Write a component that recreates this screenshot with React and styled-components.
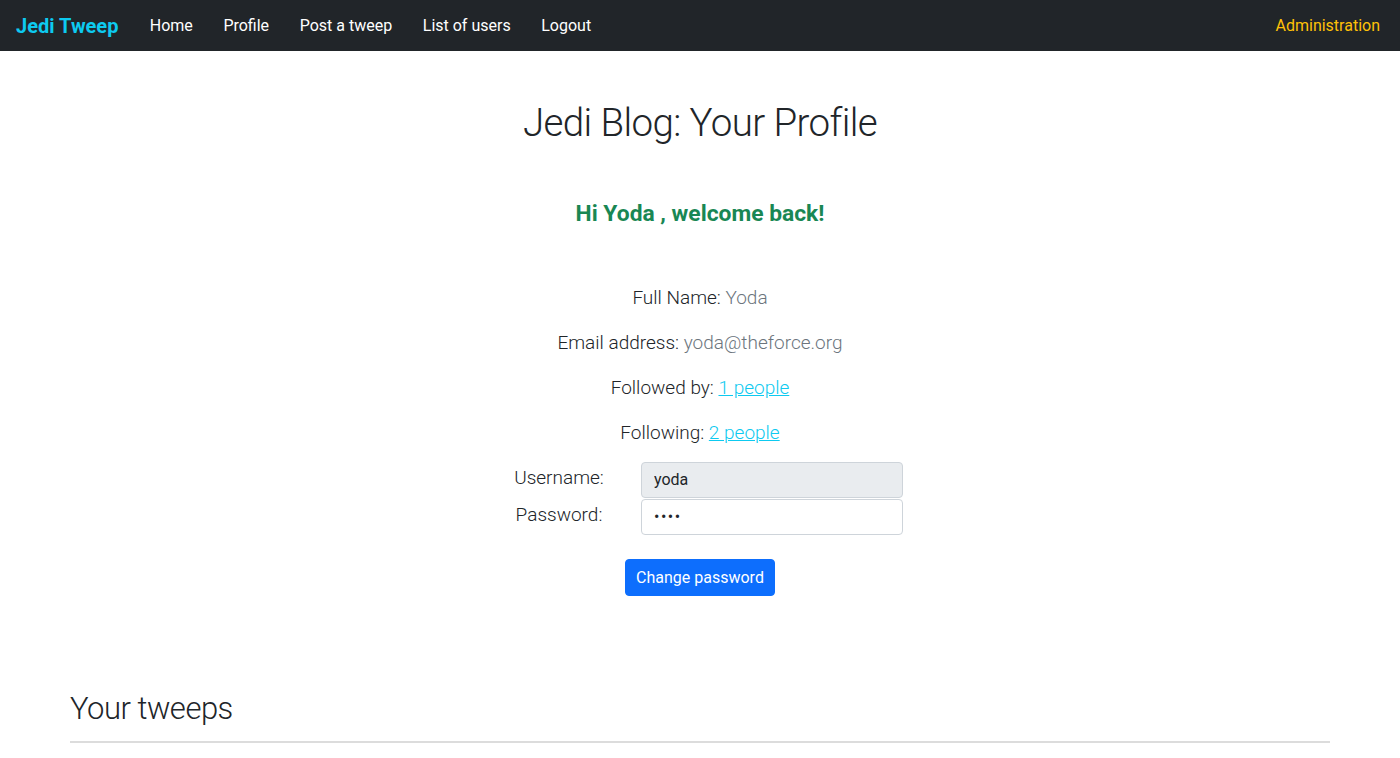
import React from "react";
import styled, { createGlobalStyle } from "styled-components";

const Global = createGlobalStyle`
  * { box-sizing: border-box; }
  body {
    margin: 0;
    font-family: Roboto, "Noto Sans", "Liberation Sans", sans-serif;
    color: #212529;
    background: #fff;
    font-size: 16px;
  }
`;

const Nav = styled.nav`
  height: 51px;
  background: #212529;
  display: flex;
  align-items: center;
  padding: 0 20px 0 16px;
`;

const Brand = styled.a`
  color: #0dcaf0;
  font-weight: 700;
  font-size: 20px;
  text-decoration: none;
  margin-right: 16px;
`;

const NavLinks = styled.div`
  display: flex;
  flex: 1;
  align-items: center;
`;

const NavLink = styled.a`
  color: ${(p) => (p.$warn ? "#ffc107" : "#fff")};
  font-size: 16px;
  text-decoration: none;
  padding: 8px 15.3px;
  margin-left: ${(p) => (p.$push ? "auto" : "0")};
  padding-right: ${(p) => (p.$push ? "0" : "15.3px")};
`;

const Main = styled.main`
  width: 90%;
  margin: 0 auto;
  text-align: center;
`;

const Title = styled.h1`
  font-weight: 300;
  font-size: 38.5px;
  letter-spacing: -0.6px;
  margin: 49px 0 0;
  line-height: 1.2;
`;

const Welcome = styled.h4`
  color: #198754;
  font-weight: 700;
  font-size: 22.8px;
  margin: 54px 0 0;
  line-height: 1.2;
`;

const Info = styled.div`
  margin-top: 58px;
  display: flex;
  flex-direction: column;
  gap: 21px;
`;

const Line = styled.p`
  font-size: 19px;
  font-weight: 300;
  line-height: 24px;
  margin: 0;
`;

const Muted = styled.span`
  color: #6c757d;
`;

const Link = styled.a`
  color: #0dcaf0;
  text-decoration: underline;
`;

const Form = styled.form`
  display: flex;
  flex-direction: column;
  align-items: center;
  margin-top: 17px;
`;

const Fields = styled.div`
  display: grid;
  grid-template-columns: 124px 262px;
  column-gap: 20px;
  row-gap: 1px;
  align-items: center;
`;

const Label = styled.label`
  font-size: 19px;
  font-weight: 300;
  text-align: center;
  margin-top: -5px;
`;

const Input = styled.input`
  height: 36px;
  width: 262px;
  border: 1px solid #ced4da;
  border-radius: 4px;
  padding: 6px 12px;
  font-family: inherit;
  font-size: 16px;
  color: #212529;
  background: ${(p) => (p.disabled ? "#e9ecef" : "#fff")};
  outline: none;
  letter-spacing: ${(p) => (p.type === "password" ? "1.5px" : "normal")};
`;

const Button = styled.button`
  margin-top: 24px;
  background: #0d6efd;
  color: #fff;
  border: 1px solid #0d6efd;
  border-radius: 4px;
  font-family: inherit;
  font-size: 16px;
  padding: 0 10.5px;
  height: 37px;
  cursor: pointer;
`;

const Section = styled.section`
  text-align: left;
  margin-top: 94px;
`;

const SectionTitle = styled.h2`
  font-weight: 300;
  font-size: 31px;
  letter-spacing: -0.5px;
  margin: 0;
  line-height: 1.2;
`;

const Rule = styled.hr`
  border: 0;
  border-top: 2px solid #dcdcdc;
  margin: 14px 0 0;
`;

export default function App() {
  return (
    <>
      <Global />
      <Nav>
        <Brand href="#">Jedi Tweep</Brand>
        <NavLinks>
          <NavLink href="#">Home</NavLink>
          <NavLink href="#">Profile</NavLink>
          <NavLink href="#">Post a tweep</NavLink>
          <NavLink href="#">List of users</NavLink>
          <NavLink href="#">Logout</NavLink>
          <NavLink href="#" $warn $push>Administration</NavLink>
        </NavLinks>
      </Nav>
      <Main>
        <Title>Jedi Blog: Your Profile</Title>
        <Welcome>Hi Yoda , welcome back!</Welcome>
        <Info>
          <Line>Full Name: <Muted>Yoda</Muted></Line>
          <Line>Email address: <Muted>yoda@theforce.org</Muted></Line>
          <Line>Followed by: <Link href="#">1 people</Link></Line>
          <Line>Following: <Link href="#">2 people</Link></Line>
        </Info>
        <Form onSubmit={(e) => e.preventDefault()}>
          <Fields>
            <Label htmlFor="u">Username:</Label>
            <Input id="u" value="yoda" disabled readOnly />
            <Label htmlFor="p">Password:</Label>
            <Input id="p" type="password" defaultValue="yoda" />
          </Fields>
          <Button type="submit">Change password</Button>
        </Form>
        <Section>
          <SectionTitle>Your tweeps</SectionTitle>
          <Rule />
        </Section>
      </Main>
    </>
  );
}
